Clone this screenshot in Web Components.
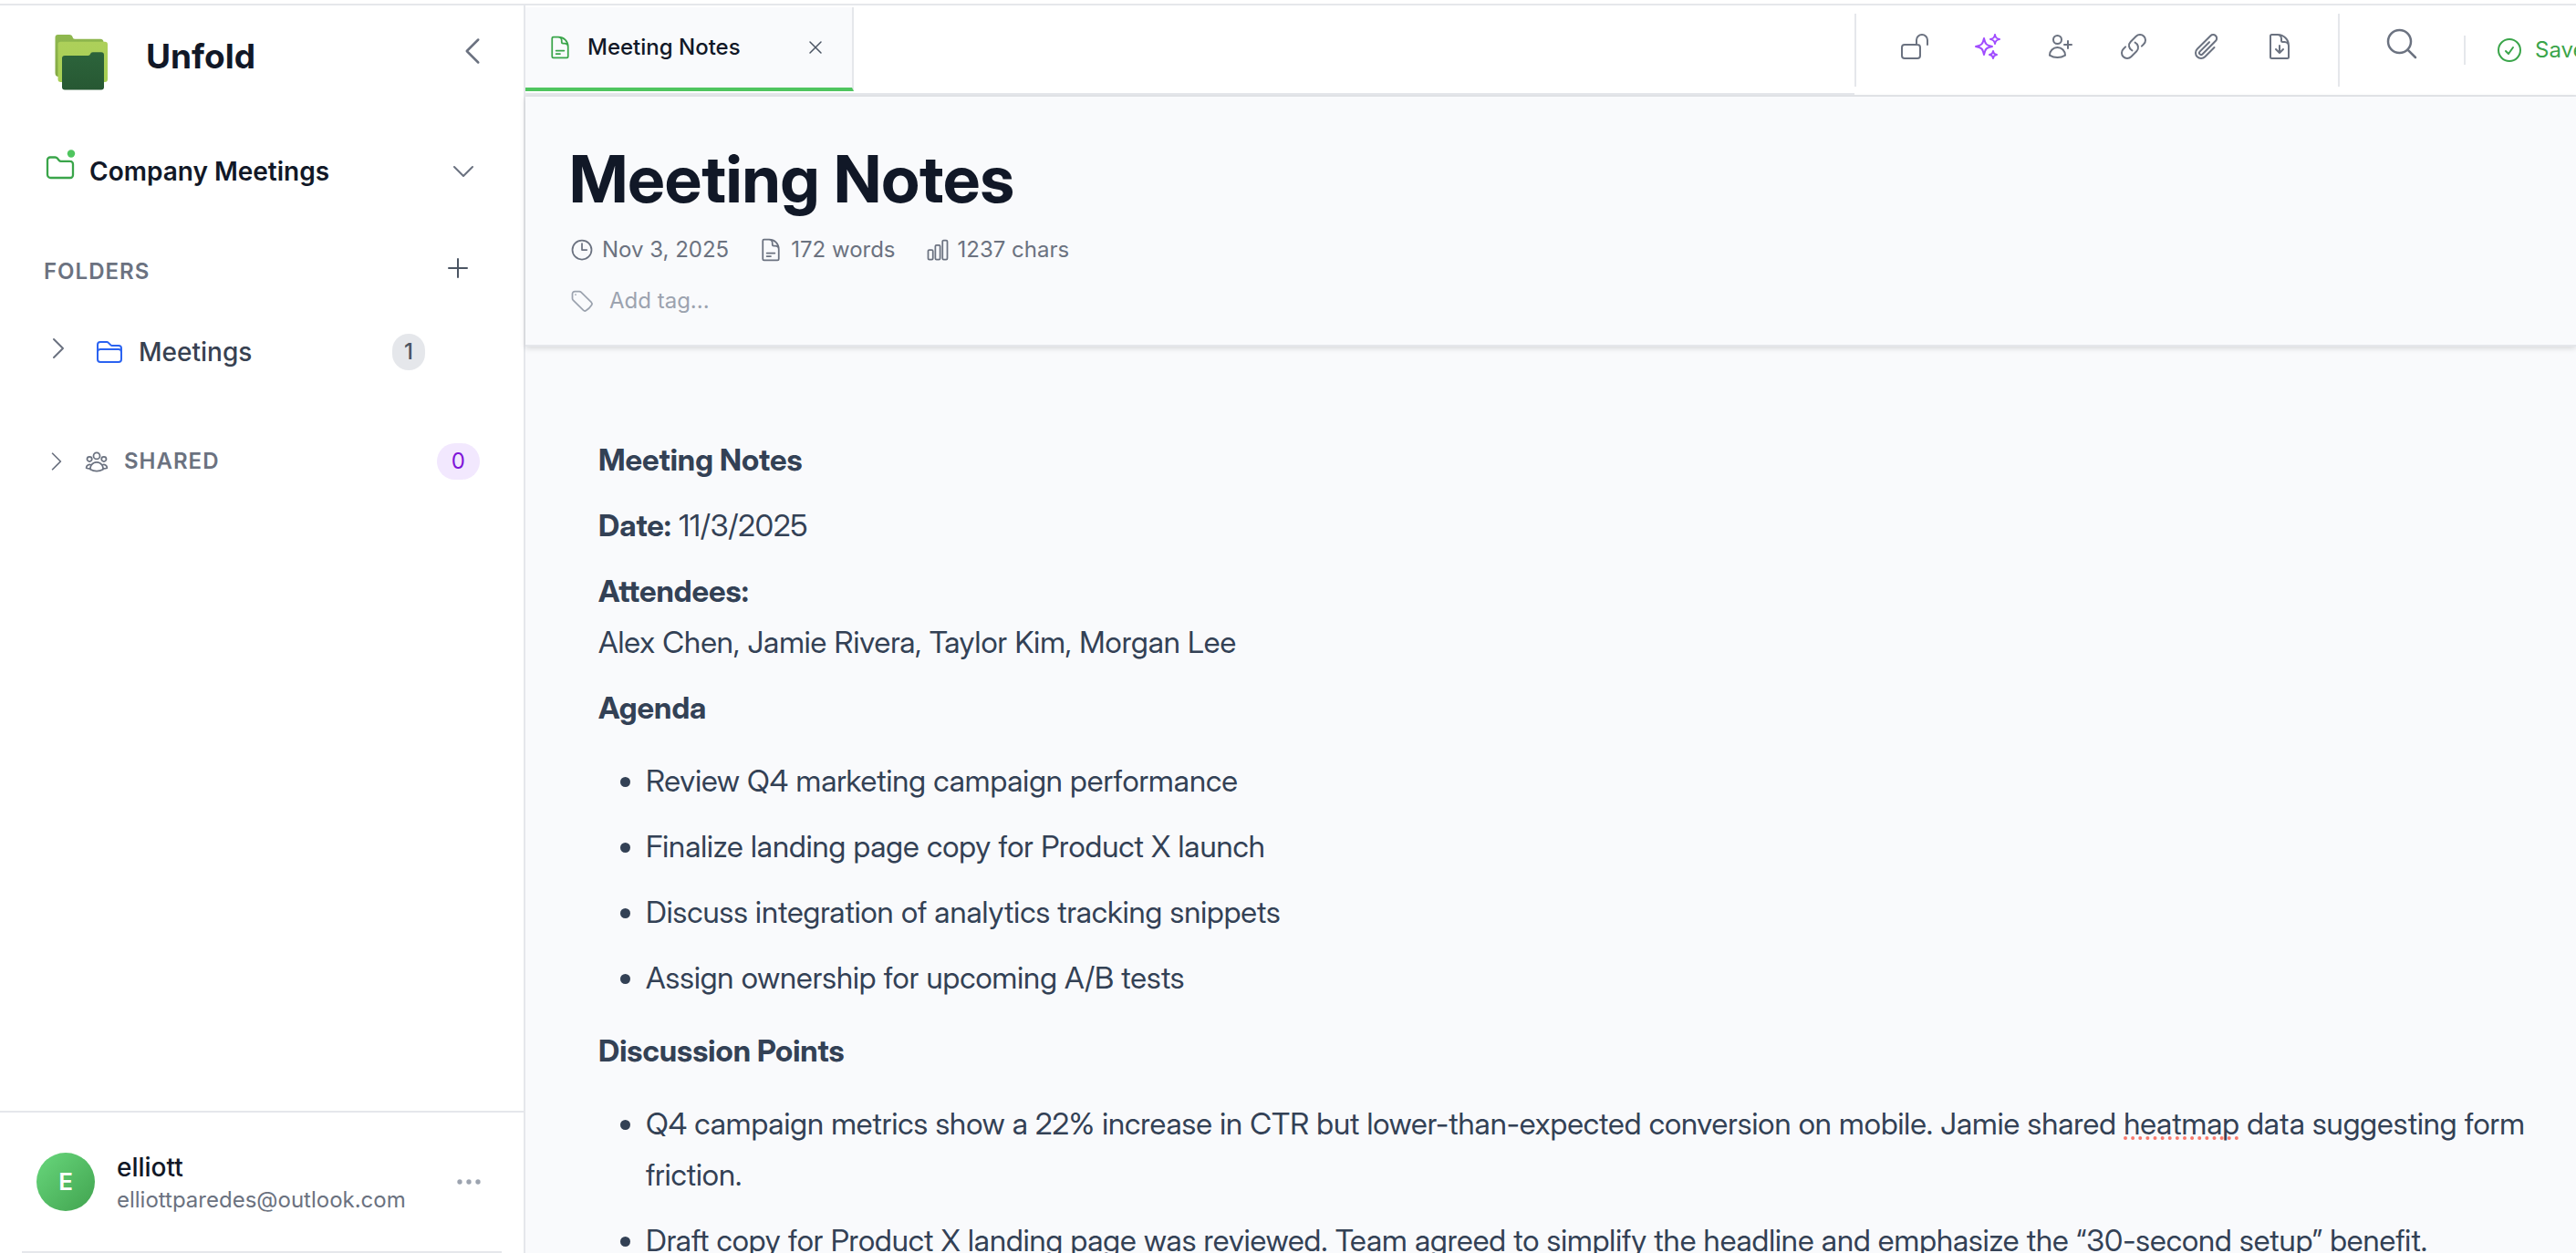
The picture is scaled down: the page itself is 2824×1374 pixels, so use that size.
<!DOCTYPE html>
<html lang="en">
<head>
<meta charset="utf-8">
<title>Unfold – Meeting Notes</title>
<style>
  html, body { height: 100%; }
  body {
    margin: 0;
    font-family: Inter, "Liberation Sans", sans-serif;
    font-size: 24px;
    line-height: 32px;
    color: #111827;
    background: #fff;
    overflow: hidden;
    --line: #e5e7eb;
    --muted: #6b7280;
    --faint: #9ca3af;
    --green: #4fc55f;
    --green-dark: #3aa54a;
    --paper: #f9fafc;
    --display: "Inter Display", Inter, "Liberation Sans", sans-serif;
  }
</style>
</head>
<body>
<unfold-app>
  <app-sidebar slot="sidebar">
    <workspace-switcher slot="workspace">Company Meetings</workspace-switcher>
    <folder-row slot="folders" count="1">Meetings</folder-row>
    <shared-row slot="shared" count="0">SHARED</shared-row>
    <user-card slot="user" name="elliott" email="elliottparedes@outlook.com"></user-card>
  </app-sidebar>
  <tab-bar slot="tabs"><doc-tab>Meeting Notes</doc-tab></tab-bar>
  <doc-toolbar slot="toolbar">Saved</doc-toolbar>
  <doc-header slot="header" date="Nov 3, 2025" words="172 words" chars="1237 chars">Meeting Notes</doc-header>
  <doc-editor slot="content"></doc-editor>
</unfold-app>

<script>
const ICONS = {
  'chevron-left': '<path d="M15.75 19.5 8.25 12l7.5-7.5"/>',
  'chevron-right': '<path d="m8.25 4.5 7.5 7.5-7.5 7.5"/>',
  'chevron-down': '<path d="m19.5 8.25-7.5 7.5-7.5-7.5"/>',
  'plus': '<path d="M12 4.5v15m7.5-7.5h-15"/>',
  'close': '<path d="M6 18 18 6M6 6l12 12"/>',
  'folder': '<path d="M2.25 12.75V12A2.25 2.25 0 0 1 4.5 9.75h15A2.25 2.25 0 0 1 21.75 12v.75m-8.69-6.44-2.12-2.12a1.5 1.5 0 0 0-1.061-.44H4.5A2.25 2.25 0 0 0 2.25 6v12a2.25 2.25 0 0 0 2.25 2.25h15A2.25 2.25 0 0 0 21.75 18V9a2.25 2.25 0 0 0-2.25-2.25h-5.379a1.5 1.5 0 0 1-1.06-.44Z"/>',
  'group': '<path d="M18 18.72a9.094 9.094 0 0 0 3.741-.479 3 3 0 0 0-4.682-2.72m.94 3.198.001.031c0 .225-.012.447-.037.666A11.944 11.944 0 0 1 12 21c-2.17 0-4.207-.576-5.963-1.584A6.062 6.062 0 0 1 6 18.719m12 0a5.971 5.971 0 0 0-.941-3.197m0 0A5.995 5.995 0 0 0 12 12.75a5.995 5.995 0 0 0-5.058 2.772m0 0a3 3 0 0 0-4.681 2.72 8.986 8.986 0 0 0 3.74.477m.94-3.197a5.971 5.971 0 0 0-.94 3.197M15 6.75a3 3 0 1 1-6 0 3 3 0 0 1 6 0Zm6 3a2.25 2.25 0 1 1-4.5 0 2.25 2.25 0 0 1 4.5 0Zm-13.5 0a2.25 2.25 0 1 1-4.5 0 2.25 2.25 0 0 1 4.5 0Z"/>',
  'document': '<path d="M19.5 14.25v-2.625a3.375 3.375 0 0 0-3.375-3.375h-1.5A1.125 1.125 0 0 1 13.5 7.125v-1.5a3.375 3.375 0 0 0-3.375-3.375H8.25m0 12.75h7.5m-7.5 3H12M10.5 2.25H5.625c-.621 0-1.125.504-1.125 1.125v17.25c0 .621.504 1.125 1.125 1.125h12.75c.621 0 1.125-.504 1.125-1.125V11.25a9 9 0 0 0-9-9Z"/>',
  'download': '<path d="M19.5 14.25v-2.625a3.375 3.375 0 0 0-3.375-3.375h-1.5A1.125 1.125 0 0 1 13.5 7.125v-1.5a3.375 3.375 0 0 0-3.375-3.375H8.25m.75 12 3 3m0 0 3-3m-3 3v-6m-1.5-9H5.625c-.621 0-1.125.504-1.125 1.125v17.25c0 .621.504 1.125 1.125 1.125h12.75c.621 0 1.125-.504 1.125-1.125V11.25a9 9 0 0 0-9-9Z"/>',
  'clock': '<path d="M12 6v6h4.5m4.5 0a9 9 0 1 1-18 0 9 9 0 0 1 18 0Z"/>',
  'bars': '<path d="M3 13.125C3 12.504 3.504 12 4.125 12h2.25c.621 0 1.125.504 1.125 1.125v6.75C7.5 20.496 6.996 21 6.375 21h-2.25A1.125 1.125 0 0 1 3 19.875v-6.75ZM9.75 8.625c0-.621.504-1.125 1.125-1.125h2.25c.621 0 1.125.504 1.125 1.125v11.25c0 .621-.504 1.125-1.125 1.125h-2.25a1.125 1.125 0 0 1-1.125-1.125V8.625ZM16.5 4.125c0-.621.504-1.125 1.125-1.125h2.25C20.496 3 21 3.504 21 4.125v15.75c0 .621-.504 1.125-1.125 1.125h-2.25a1.125 1.125 0 0 1-1.125-1.125V4.125Z"/>',
  'tag': '<path d="M9.568 3H5.25A2.25 2.25 0 0 0 3 5.25v4.318c0 .597.237 1.17.659 1.591l9.581 9.581c.699.699 1.78.872 2.607.33a18.095 18.095 0 0 0 5.223-5.223c.542-.827.369-1.908-.33-2.607L11.16 3.66A2.25 2.25 0 0 0 9.568 3Z"/><path d="M6 6h.008v.008H6V6Z"/>',
  'lock-open': '<path d="M13.5 10.5V6.75a4.5 4.5 0 1 1 9 0v3.75M3.75 21.75h10.5a2.25 2.25 0 0 0 2.25-2.25v-6.75a2.25 2.25 0 0 0-2.25-2.25H3.75a2.25 2.25 0 0 0-2.25 2.25v6.75a2.25 2.25 0 0 0 2.25 2.25Z"/>',
  'sparkles': '<path d="M9.813 15.904 9 18.75l-.813-2.846a4.5 4.5 0 0 0-3.09-3.09L2.25 12l2.846-.813a4.5 4.5 0 0 0 3.09-3.09L9 5.25l.813 2.846a4.5 4.5 0 0 0 3.09 3.09L15.75 12l-2.846.813a4.5 4.5 0 0 0-3.09 3.09ZM18.259 8.715 18 9.75l-.259-1.035a3.375 3.375 0 0 0-2.455-2.456L14.25 6l1.036-.259a3.375 3.375 0 0 0 2.455-2.456L18 2.25l.259 1.035a3.375 3.375 0 0 0 2.456 2.456L21.75 6l-1.035.259a3.375 3.375 0 0 0-2.456 2.456ZM16.894 20.567 16.5 21.75l-.394-1.183a2.25 2.25 0 0 0-1.423-1.423L13.5 18.75l1.183-.394a2.25 2.25 0 0 0 1.423-1.423l.394-1.183.394 1.183a2.25 2.25 0 0 0 1.423 1.423l1.183.394-1.183.394a2.25 2.25 0 0 0-1.423 1.423Z"/>',
  'user-plus': '<path d="M18 7.5v3m0 0v3m0-3h3m-3 0h-3m-2.25-4.125a3.375 3.375 0 1 1-6.75 0 3.375 3.375 0 0 1 6.75 0ZM3 19.235v-.11a6.375 6.375 0 0 1 12.75 0v.109A12.318 12.318 0 0 1 9.374 21c-2.331 0-4.512-.645-6.374-1.766Z"/>',
  'link': '<path d="M13.19 8.688a4.5 4.5 0 0 1 1.242 7.244l-4.5 4.5a4.5 4.5 0 0 1-6.364-6.364l1.757-1.757m13.35-.622 1.757-1.757a4.5 4.5 0 0 0-6.364-6.364l-4.5 4.5a4.5 4.5 0 0 0 1.242 7.244"/>',
  'clip': '<path d="m18.375 12.739-7.693 7.693a4.5 4.5 0 0 1-6.364-6.364l10.94-10.94A3 3 0 1 1 19.5 7.372L8.552 18.32m.009-.01-.01.01m5.699-9.941-7.81 7.81a1.5 1.5 0 0 0 2.112 2.13"/>',
  'search': '<path d="m21 21-5.197-5.197m0 0A7.5 7.5 0 1 0 5.196 5.196a7.5 7.5 0 0 0 10.607 10.607Z"/>',
  'check': '<path d="M9 12.75 11.25 15 15 9.75M21 12a9 9 0 1 1-18 0 9 9 0 0 1 18 0Z"/>',
  'more': '<g fill="currentColor" stroke="none"><circle cx="6" cy="12" r="1.6"/><circle cx="12" cy="12" r="1.6"/><circle cx="18" cy="12" r="1.6"/></g>'
};

const BASE = `
  *, *::before, *::after { box-sizing: border-box; }
  button { font: inherit; color: inherit; background: none; border: 0; padding: 0; margin: 0; text-align: left; cursor: pointer; }
`;

function define(name, render) {
  customElements.define(name, class extends HTMLElement {
    connectedCallback() {
      if (this.shadowRoot) return;
      const root = this.attachShadow({ mode: 'open' });
      const tpl = document.createElement('template');
      tpl.innerHTML = render(this, a => this.getAttribute(a) || '');
      root.append(tpl.content.cloneNode(true));
    }
  });
}

define('ui-icon', (el, a) => `
  <style>
    :host { display: block; flex: none; width: var(--size, 32px); height: var(--size, 32px); }
    svg { display: block; width: 100%; height: 100%; }
  </style>
  <svg viewBox="0 0 24 24" fill="none" stroke="currentColor" stroke-width="1.5" stroke-linecap="round" stroke-linejoin="round" aria-hidden="true">${ICONS[a('name')]}</svg>`);

define('unfold-app', () => `
  <style>
    ${BASE}
    :host { display: grid; grid-template-columns: 576px minmax(0, 1fr); height: 100vh; box-sizing: border-box; padding-top: 4px; }
    .side { border-top: 2px solid var(--line); border-right: 2px solid var(--line); display: flex; flex-direction: column; min-height: 0; }
    .main { border-top: 2px solid var(--line); display: flex; flex-direction: column; min-width: 0; min-height: 0; background: var(--paper); }
    .bar { display: flex; flex: none; height: 100px; background: #fff; }
    ::slotted([slot=content]) { flex: 1; min-height: 0; overflow: hidden; }
  </style>
  <aside class="side"><slot name="sidebar"></slot></aside>
  <main class="main">
    <div class="bar"><slot name="tabs"></slot><slot name="toolbar"></slot></div>
    <slot name="header"></slot>
    <slot name="content"></slot>
  </main>`);

define('app-logo', () => `
  <style>:host { display: block; flex: none; width: 64px; height: 64px; } svg { display: block; }</style>
  <svg width="64" height="64" viewBox="0 0 64 64" role="img" aria-label="Unfold logo">
    <defs>
      <linearGradient id="b" x1="0" y1="0" x2="0" y2="1"><stop offset="0" stop-color="#8fb84f"/><stop offset="1" stop-color="#84a945"/></linearGradient>
      <linearGradient id="m" x1="0" y1="0" x2="0" y2="1"><stop offset="0" stop-color="#add05a"/><stop offset="1" stop-color="#a8cf55"/></linearGradient>
      <linearGradient id="f" x1="0" y1="0" x2="0" y2="1"><stop offset="0" stop-color="#2c643b"/><stop offset="1" stop-color="#275833"/></linearGradient>
    </defs>
    <path fill="url(#b)" d="M4.500 5a3 3 0 0 1 3-3H20q3 0 3.500 2.500.5 2.200 2.500 2.200H54q3 0 3.500 3V48H8q-3.500 0-3.500-4Z"/>
    <path fill="url(#m)" d="M7.500 12.700a3 3 0 0 1 3-3H59a3 3 0 0 1 3 3v38.300a3 3 0 0 1-3 3H10.500a3 3 0 0 1-3-3Z"/>
    <path fill="url(#f)" d="M12 28a3 3 0 0 1 3-3h25.500q2 0 2.500-1.800.5-2 2.800-2H55a3 3 0 0 1 3 3V59.600a3 3 0 0 1-3 3H15a3 3 0 0 1-3-3Z"/>
  </svg>`);

define('app-sidebar', () => `
  <style>
    ${BASE}
    :host { display: flex; flex-direction: column; flex: 1; min-height: 0; }
    .brand { display: flex; align-items: flex-start; padding: 30px 36px 0 56px; height: 158px; }
    .name { flex: 1; margin-left: 40px; font-size: 37px; line-height: 52px; font-weight: 700; color: #111827; }
    .collapse { color: var(--muted); --size: 40px; }
    .heading { display: flex; align-items: flex-start; justify-content: space-between; padding: 66px 56px 0 48px; color: var(--muted); }
    .heading h2 { margin: 0; font-size: 24px; line-height: 40px; font-weight: 600; letter-spacing: 1px; }
    .heading button { color: #4b5563; }
    .folders { padding-top: 48px; }
    .shared { padding-top: 80px; }
    footer { margin-top: auto; border-top: 2px solid var(--line); }
    hr { border: 0; height: 2px; margin: 0 24px; background: var(--line); }
  </style>
  <header class="brand">
    <app-logo></app-logo>
    <span class="name">Unfold</span>
    <button class="collapse" aria-label="Collapse sidebar"><ui-icon name="chevron-left"></ui-icon></button>
  </header>
  <slot name="workspace"></slot>
  <div class="heading"><h2>FOLDERS</h2><button aria-label="New folder"><ui-icon name="plus"></ui-icon></button></div>
  <nav class="folders" aria-label="Folders"><slot name="folders"></slot></nav>
  <nav class="shared" aria-label="Shared"><slot name="shared"></slot></nav>
  <footer><slot name="user"></slot><hr></footer>`);

define('workspace-switcher', () => `
  <style>
    ${BASE}
    :host { display: block; }
    button { display: flex; align-items: center; gap: 14px; width: 100%; height: 48px; padding: 0 50px 0 48px; font-size: 28px; line-height: 40px; font-weight: 600; }
    svg { flex: none; align-self: flex-start; }
    span { flex: 1; }
    ui-icon { color: var(--muted); }
  </style>
  <button aria-haspopup="listbox">
    <svg width="36" height="36" viewBox="0 0 36 36" fill="none" aria-hidden="true">
      <path d="M4 27.500V11.500a3 3 0 0 1 3-3h5.500a3 3 0 0 1 2.300 1.100l1.800 2.200a3 3 0 0 0 2.300 1.100H29a3 3 0 0 1 3 3V28a3 3 0 0 1-3 3H7.500A3.500 3.500 0 0 1 4 27.500Z" stroke="#3aa54a" stroke-width="2.300"/>
      <circle cx="30" cy="4.500" r="7" fill="#fff"/>
      <circle cx="30" cy="4.500" r="4.200" fill="#4fc55f"/>
    </svg>
    <span><slot></slot></span>
    <ui-icon name="chevron-down"></ui-icon>
  </button>`);

define('folder-row', (el, a) => `
  <style>
    ${BASE}
    :host { display: block; }
    .row { display: flex; align-items: flex-start; padding: 0 108px 0 48px; width: 100%; }
    .toggle { color: var(--muted); margin-right: 24px; }
    .open { flex: 1; display: flex; align-items: center; gap: 16px; font-size: 28px; line-height: 40px; font-weight: 500; color: #374151; }
    .open ui-icon { color: #2b63f1; }
    .badge { padding: 0 13px; border-radius: 20px; background: #e5e7eb; color: #4b5563; line-height: 40px; font-weight: 500; }
  </style>
  <div class="row">
    <button class="toggle" aria-label="Expand"><ui-icon name="chevron-right"></ui-icon></button>
    <button class="open"><ui-icon name="folder"></ui-icon><slot></slot></button>
    <span class="badge">${a('count')}</span>
  </div>`);

define('shared-row', (el, a) => `
  <style>
    ${BASE}
    :host { display: block; }
    button { display: flex; align-items: center; gap: 16px; width: 100%; padding: 0 48px; --size: 28px; color: var(--muted); line-height: 40px; }
    .label { flex: 1; font-weight: 600; letter-spacing: 1px; }
    .badge { padding: 0 16px; border-radius: 20px; background: #f2e8fe; color: #7e14d8; font-weight: 400; }
  </style>
  <button aria-expanded="false">
    <ui-icon name="chevron-right"></ui-icon><ui-icon name="group"></ui-icon>
    <span class="label"><slot></slot></span><span class="badge">${a('count')}</span>
  </button>`);

define('user-card', (el, a) => `
  <style>
    ${BASE}
    :host { display: flex; align-items: center; gap: 24px; height: 152px; padding: 0 40px; }
    .avatar { flex: none; display: grid; place-items: center; width: 64px; height: 64px; border-radius: 50%; color: #fff; font-weight: 600; font-size: 26px; background: linear-gradient(135deg, #68d77c, #41a34f); }
    .who { flex: 1; min-width: 0; }
    .name { font-size: 28px; line-height: 40px; font-weight: 500; }
    .mail { color: var(--muted); }
    .more { color: var(--faint); --size: 40px; }
  </style>
  <span class="avatar" aria-hidden="true">E</span>
  <div class="who"><div class="name">${a('name')}</div><div class="mail">${a('email')}</div></div>
  <button class="more" aria-label="Account menu"><ui-icon name="more"></ui-icon></button>`);

define('tab-bar', () => `
  <style>:host { display: flex; align-items: flex-start; flex: 1; min-width: 0; box-sizing: border-box; padding-top: 2px; border-bottom: 4px solid var(--line); }</style>
  <slot></slot>`);

define('doc-tab', () => `
  <style>
    ${BASE}
    :host { display: flex; align-items: center; width: 360px; height: 92px; box-sizing: border-box; padding: 0 28px 0 24px; background: var(--paper); border-right: 2px solid var(--line); border-bottom: 4px solid var(--green); }
    .tab { flex: 1; display: flex; align-items: center; gap: 16px; font-weight: 500; }
    .tab ui-icon { --size: 28px; color: var(--green-dark); }
    .close { --size: 24px; color: #4b5563; }
  </style>
  <button class="tab"><ui-icon name="document"></ui-icon><slot></slot></button>
  <button class="close" aria-label="Close tab"><ui-icon name="close"></ui-icon></button>`);

define('doc-toolbar', () => `
  <style>
    ${BASE}
    :host { display: flex; align-items: center; flex: none; width: 791px; box-sizing: border-box; overflow: hidden; border-bottom: 2px solid var(--line); color: var(--muted); }
    .rule { flex: none; width: 2px; height: 80px; background: var(--line); }
    .short { height: 32px; }
    .tools { display: flex; flex: none; padding: 0 24px 8px; }
    .tools button { display: grid; place-items: center; width: 80px; height: 64px; }
    .ai { color: #a14cff; }
    .search { flex: none; display: grid; place-items: center; width: 136px; padding-bottom: 14px; --size: 40px; }
    .state { flex: none; display: flex; align-items: center; gap: 12px; padding-left: 32px; color: var(--green-dark); }
  </style>
  <span class="rule"></span>
  <div class="tools" role="toolbar" aria-label="Note tools">
    <button aria-label="Lock"><ui-icon name="lock-open"></ui-icon></button>
    <button class="ai" aria-label="Assistant"><ui-icon name="sparkles"></ui-icon></button>
    <button aria-label="Invite"><ui-icon name="user-plus"></ui-icon></button>
    <button aria-label="Copy link"><ui-icon name="link"></ui-icon></button>
    <button aria-label="Attach"><ui-icon name="clip"></ui-icon></button>
    <button aria-label="Export"><ui-icon name="download"></ui-icon></button>
  </div>
  <span class="rule"></span>
  <button class="search" aria-label="Search"><ui-icon name="search"></ui-icon></button>
  <span class="rule short"></span>
  <span class="state"><ui-icon name="check"></ui-icon><slot></slot></span>`);

define('doc-header', (el, a) => `
  <style>
    ${BASE}
    :host { display: block; flex: none; padding: 48px 48px 32px; border-bottom: 2px solid var(--line); box-shadow: 0 2px 6px rgba(0, 0, 0, .14); color: var(--muted); --size: 28px; }
    h1 { margin: 0 0 20px; font-family: var(--display); font-variation-settings: "opsz" 32; font-size: 72px; line-height: 84px; font-weight: 700; color: #111827; }
    .meta { display: flex; gap: 32px; }
    .meta span { display: flex; align-items: center; gap: 8px; }
    label { display: flex; align-items: center; gap: 16px; margin-top: 24px; color: var(--faint); }
    input { flex: 1; min-width: 0; height: 32px; padding: 0; border: 0; outline: 0; background: none; font: inherit; color: #374151; }
    input::placeholder { color: var(--faint); opacity: 1; }
  </style>
  <h1><slot></slot></h1>
  <div class="meta">
    <span><ui-icon name="clock"></ui-icon>${a('date')}</span>
    <span><ui-icon name="document"></ui-icon>${a('words')}</span>
    <span><ui-icon name="bars"></ui-icon>${a('chars')}</span>
  </div>
  <label><ui-icon name="tag"></ui-icon><input type="text" placeholder="Add tag..." aria-label="Add tag"></label>`);

define('doc-editor', () => `
  <style>
    ${BASE}
    :host { display: block; padding: 96px 24px 0 80px; font-family: var(--display); font-variation-settings: "opsz" 32; font-size: 33px; line-height: 56px; color: #334155; }
    p { margin: 16px 0; }
    p:first-child { margin-top: 0; }
    strong { font-weight: 700; }
    ul { margin: 24px 0; padding-left: 52px; }
    li p { margin: 16px 0; }
    .typo { text-decoration: underline dotted #f8796d 4px; text-underline-offset: 2px; text-decoration-skip-ink: none; }
  </style>
  <article>
    <p><strong>Meeting Notes</strong></p>
    <p><strong>Date:</strong> 11/3/2025</p>
    <p><strong>Attendees:</strong><br>Alex Chen, Jamie Rivera, Taylor Kim, Morgan Lee</p>
    <p><strong>Agenda</strong></p>
    <ul>
      <li><p>Review Q4 marketing campaign performance</p></li>
      <li><p>Finalize landing page copy for Product X launch</p></li>
      <li><p>Discuss integration of analytics tracking snippets</p></li>
      <li><p>Assign ownership for upcoming A/B tests</p></li>
    </ul>
    <p><strong>Discussion Points</strong></p>
    <ul>
      <li><p>Q4 campaign metrics show a 22% increase in CTR but lower-than-expected conversion on mobile. Jamie shared <span class="typo">heatmap</span> data suggesting form friction.</p></li>
      <li><p>Draft copy for Product X landing page was reviewed. Team agreed to simplify the headline and emphasize the “30-second setup” benefit.</p></li>
    </ul>
  </article>`);
</script>
</body>
</html>
